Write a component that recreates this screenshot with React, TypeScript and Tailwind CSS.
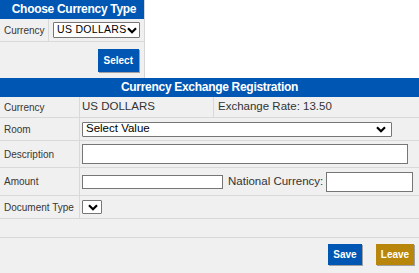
import React from 'react';

const Chevron: React.FC = () => (
    <svg width="10" height="7" viewBox="0 0 10 7" className="shrink-0">
        <path d="M1 1.2 L5 5.2 L9 1.2" fill="none" stroke="#000" strokeWidth="2.2" />
    </svg>
);

const FakeSelect: React.FC<{ value?: string, className?: string }> = ({ value, className }) => (
    <div className={`flex items-center justify-between bg-white border border-[#767676] rounded-[1px] ${className ?? ''}`}>
        <span className="whitespace-nowrap">{value}</span>
        <Chevron />
    </div>
);

const Label: React.FC<{ children: React.ReactNode }> = ({ children }) => (
    <div className="w-[80px] shrink-0 border-r border-[#d9d9d9] pl-[4px] flex items-center whitespace-nowrap text-[10px] text-[#3a3632]">
        {children}
    </div>
);

const App: React.FC = () => {
    return (
        <div className="w-[419px] h-[273px] bg-white overflow-hidden font-['Liberation_Sans',Arial,sans-serif]">
            {/* Choose currency box */}
            <div className="w-[145px] bg-[#f0f0f0] border-r border-[#d6d6d6]">
                <div className="h-[19px] bg-[#0056b3] text-white font-bold text-[12px] tracking-[-0.3px] leading-[19px] text-center pl-[4px]">
                    Choose Currency Type
                </div>
                <div className="flex h-[23px] border-b border-[#d9d9d9]">
                    <div className="w-[49px] border-r border-[#d9d9d9] pl-[4px] flex items-center text-[10px] text-[#3a3632]">Currency</div>
                    <div className="flex items-center pl-[4px]">
                        <FakeSelect value="US DOLLARS" className="w-[87px] h-[16px] pl-[3px] pr-[2px] text-[10.5px] text-black tracking-[0.3px]" />
                    </div>
                </div>
                <div className="h-[36px] flex justify-end pt-[7px] pr-[5px]">
                    <button className="h-[23px] px-[6px] bg-[#0056b3] text-white font-bold text-[10px] shadow-[1px_1px_0_#a0a0a0]">Select</button>
                </div>
            </div>

            {/* Exchange registration */}
            <div className="bg-[#f0f0f0] h-[195px] text-[11.5px]">
                <div className="h-[19px] bg-[#0056b3] text-white font-bold text-[12px] tracking-[-0.3px] leading-[19px] text-center">
                    Currency Exchange Registration
                </div>
                <div className="flex h-[21px] border-b border-[#d9d9d9] text-[#333]">
                    <Label>Currency</Label>
                    <div className="w-[134px] border-r border-[#d9d9d9] pl-[2px] flex items-center">US DOLLARS</div>
                    <div className="pl-[4px] flex items-center">Exchange Rate: 13.50</div>
                </div>
                <div className="flex h-[23px] border-b border-[#d9d9d9]">
                    <Label>Room</Label>
                    <div className="flex items-center pl-[2px]">
                        <FakeSelect value="Select Value" className="w-[310px] h-[15px] pl-[3px] pr-[5px] text-black" />
                    </div>
                </div>
                <div className="flex h-[27px] border-b border-[#d9d9d9]">
                    <Label>Description</Label>
                    <div className="flex items-center pl-[2px]">
                        <input className="w-[326px] h-[20px] bg-white border border-[#767676] outline-none" />
                    </div>
                </div>
                <div className="flex h-[28px] border-b border-[#d9d9d9]">
                    <Label>Amount</Label>
                    <div className="flex items-center pl-[2px] text-[#333] whitespace-nowrap">
                        <input className="w-[141px] h-[14px] bg-white border border-[#767676] outline-none" />
                        <span className="ml-[5px] mr-[3px]">National Currency:</span>
                        <input className="w-[87px] h-[20px] bg-white border border-[#767676] outline-none" />
                    </div>
                </div>
                <div className="flex h-[23px] border-b border-[#d9d9d9]">
                    <Label>Document Type</Label>
                    <div className="flex items-center pl-[2px]">
                        <FakeSelect className="w-[20px] h-[14px] pl-[4px] pr-[3px]" />
                    </div>
                </div>
                <div className="h-[19px] border-b border-[#d9d9d9]" />
                <div className="flex justify-end gap-[14px] pt-[6px] pr-[5px]">
                    <button className="h-[21px] w-[34px] bg-[#0056b3] text-white font-bold text-[10px] shadow-[1px_1px_0_#a0a0a0]">Save</button>
                    <button className="h-[21px] w-[38px] bg-[#b8860b] text-white font-bold text-[10px] shadow-[1px_1px_0_#a0a0a0]">Leave</button>
                </div>
            </div>
        </div>
    );
};

export default App;
